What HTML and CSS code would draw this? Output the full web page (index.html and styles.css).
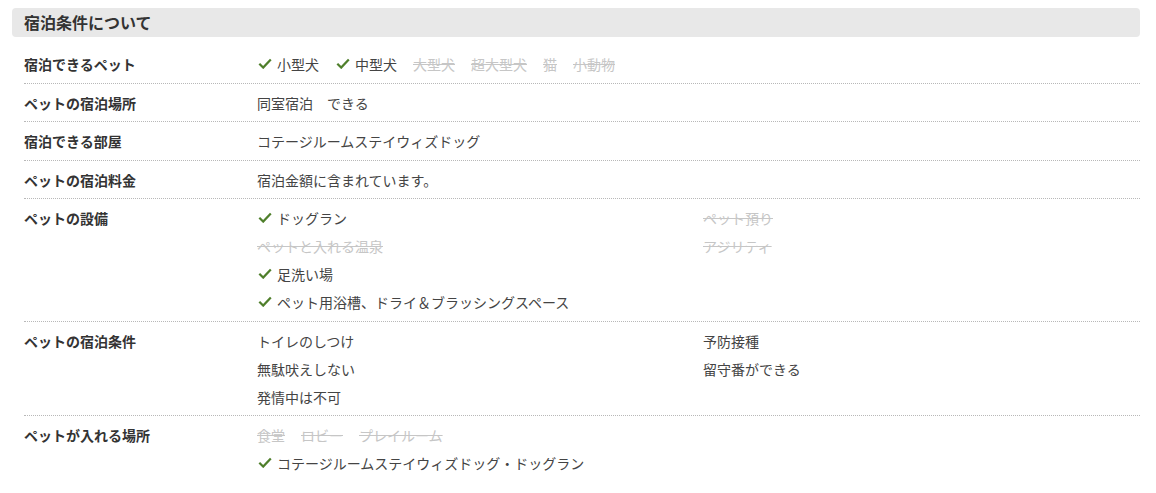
FILE: index.html
```html
<!DOCTYPE html>
<html lang="ja">
<head>
<meta charset="utf-8">
<link rel="stylesheet" href="styles.css">
</head>
<body>
<section class="section">
  <h2 class="section-title">宿泊条件について</h2>
  <div class="table">
    <div class="row">
      <div class="label">宿泊できるペット</div>
      <div class="inline">
        <span class="item ok"><svg class="check" viewBox="0 0 14 11"><polyline points="1.3,5.8 5.2,9.6 12.8,1.4"/></svg>小型犬</span>
        <span class="item ok"><svg class="check" viewBox="0 0 14 11"><polyline points="1.3,5.8 5.2,9.6 12.8,1.4"/></svg>中型犬</span>
        <span class="item off">大型犬</span>
        <span class="item off">超大型犬</span>
        <span class="item off">猫</span>
        <span class="item off">小動物</span>
      </div>
    </div>
    <div class="row">
      <div class="label">ペットの宿泊場所</div>
      <div class="inline"><span class="item">同室宿泊　できる</span></div>
    </div>
    <div class="row">
      <div class="label">宿泊できる部屋</div>
      <div class="inline"><span class="item">コテージルームステイウィズドッグ</span></div>
    </div>
    <div class="row">
      <div class="label">ペットの宿泊料金</div>
      <div class="inline"><span class="item">宿泊金額に含まれています。</span></div>
    </div>
    <div class="row">
      <div class="label">ペットの設備</div>
      <div class="cols">
        <div class="col">
          <span class="item ok"><svg class="check" viewBox="0 0 14 11"><polyline points="1.3,5.8 5.2,9.6 12.8,1.4"/></svg>ドッグラン</span>
          <span class="item off">ペットと入れる温泉</span>
          <span class="item ok"><svg class="check" viewBox="0 0 14 11"><polyline points="1.3,5.8 5.2,9.6 12.8,1.4"/></svg>足洗い場</span>
          <span class="item ok"><svg class="check" viewBox="0 0 14 11"><polyline points="1.3,5.8 5.2,9.6 12.8,1.4"/></svg>ペット用浴槽、ドライ＆ブラッシングスペース</span>
        </div>
        <div class="col">
          <span class="item off">ペット預り</span>
          <span class="item off">アジリティ</span>
        </div>
      </div>
    </div>
    <div class="row">
      <div class="label">ペットの宿泊条件</div>
      <div class="cols">
        <div class="col">
          <span class="item">トイレのしつけ</span>
          <span class="item">無駄吠えしない</span>
          <span class="item">発情中は不可</span>
        </div>
        <div class="col">
          <span class="item">予防接種</span>
          <span class="item">留守番ができる</span>
        </div>
      </div>
    </div>
    <div class="row last">
      <div class="label">ペットが入れる場所</div>
      <div class="stack">
        <div class="inline">
          <span class="item off">食堂</span>
          <span class="item off">ロビー</span>
          <span class="item off">プレイルーム</span>
        </div>
        <div class="inline">
          <span class="item ok"><svg class="check" viewBox="0 0 14 11"><polyline points="1.3,5.8 5.2,9.6 12.8,1.4"/></svg>コテージルームステイウィズドッグ・ドッグラン</span>
        </div>
      </div>
    </div>
  </div>
</section>
</body>
</html>
```

FILE: styles.css
```css
* { box-sizing: border-box; }
html, body { margin: 0; padding: 0; background: #fff; }
body {
  font-family: "Noto Sans CJK JP", "Noto Sans", sans-serif;
  color: #333;
  font-size: 14px;
}
.section {
  margin: 8px 16px 0 12px;
}
.section-title {
  margin: 0;
  height: 29px;
  line-height: 29px;
  padding: 0 12px;
  background: #e8e8e8;
  border-radius: 4px;
  font-size: 16px;
  font-weight: bold;
  color: #333;
}
.table {
  margin: 8px 0 0 12px;
}
.row {
  display: grid;
  grid-template-columns: 233px 1fr;
  padding: 5px 0 4.5px;
  border-bottom: 1px dotted #b8b8b8;
}
.row.last { border-bottom: none; }
.label {
  font-weight: bold;
  line-height: 28px;
  color: #333;
}
.inline {
  display: flex;
  flex-wrap: wrap;
  column-gap: 16px;
}
.stack { display: flex; flex-direction: column; }
.cols {
  display: grid;
  grid-template-columns: 446px 1fr;
}
.col { display: flex; flex-direction: column; }
.item {
  display: flex;
  align-items: center;
  line-height: 28px;
  color: #444;
  white-space: nowrap;
}
.item.off {
  color: #c6c6c6;
  text-decoration: line-through;
}
.check {
  width: 14px;
  height: 11px;
  margin: 0 5px 2px 1px;
  flex: none;
}
.check polyline {
  fill: none;
  stroke: #4f7f2b;
  stroke-width: 2.2;
}
```
